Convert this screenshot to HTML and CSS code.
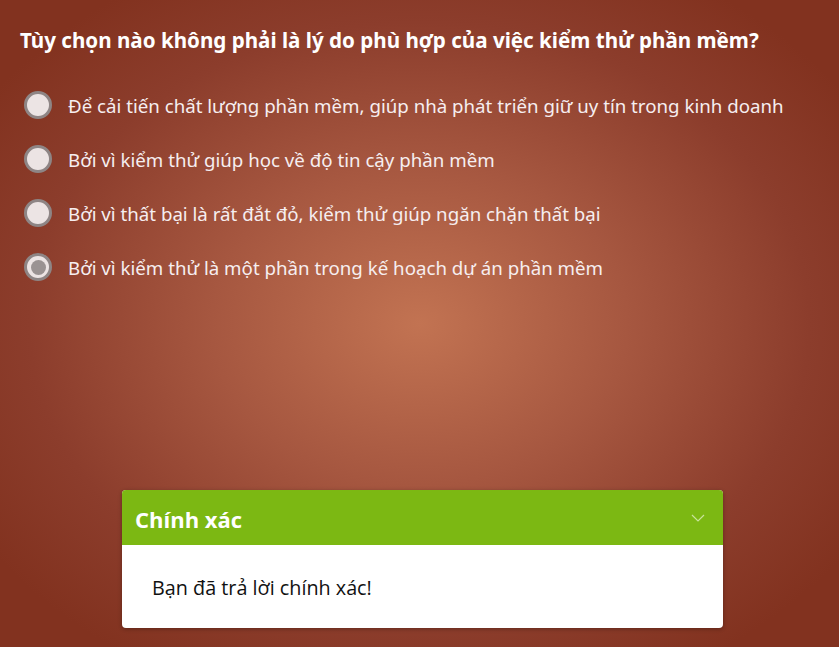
FILE: index.html
```html
<!DOCTYPE html>
<html lang="vi">
<head>
<meta charset="utf-8">
<link rel="stylesheet" href="styles.css">
</head>
<body>
<main class="stage">
  <h1 class="question">Tùy chọn nào không phải là lý do phù hợp của việc kiểm thử phần mềm?</h1>
  <ul class="options">
    <li class="option"><span class="radio"></span><span class="label">Để cải tiến chất lượng phần mềm, giúp nhà phát triển giữ uy tín trong kinh doanh</span></li>
    <li class="option"><span class="radio"></span><span class="label">Bởi vì kiểm thử giúp học về độ tin cậy phần mềm</span></li>
    <li class="option"><span class="radio"></span><span class="label">Bởi vì thất bại là rất đắt đỏ, kiểm thử giúp ngăn chặn thất bại</span></li>
    <li class="option"><span class="radio checked"></span><span class="label">Bởi vì kiểm thử là một phần trong kế hoạch dự án phần mềm</span></li>
  </ul>
  <section class="feedback">
    <header class="fb-head">
      <span class="fb-title">Chính xác</span>
      <svg class="chev" width="14" height="8" viewBox="0 0 14 8"><path d="M1 1 L7 7 L13 1" fill="none" stroke="#c8e29a" stroke-width="1.2"/></svg>
    </header>
    <div class="fb-body">Bạn đã trả lời chính xác!</div>
  </section>
</main>
</body>
</html>
```
FILE: styles.css
```css
html, body {
  margin: 0;
  padding: 0;
  height: 100%;
}
body {
  background: radial-gradient(ellipse 62% 62% at 50% 50%, #c27352 0%, #a65740 40%, #8c3d2c 75%, #82321f 100%);
  font-family: "Noto Sans", "Open Sans", sans-serif;
  color: #fff;
  overflow: hidden;
}
.stage {
  height: 647px;
  display: flex;
  flex-direction: column;
  padding: 0 20px;
  box-sizing: border-box;
}
.question {
  margin: 26px 0 0 0;
  font-size: 20.6px;
  font-weight: 700;
  line-height: 28px;
  white-space: nowrap;
}
.options {
  list-style: none;
  margin: 37px 0 0 0;
  padding: 0;
  display: flex;
  flex-direction: column;
  gap: 26px;
}
.option {
  display: flex;
  align-items: center;
  gap: 16px;
  height: 28px;
  font-size: 18.7px;
  color: #f6eef0;
  white-space: nowrap;
}
.radio {
  width: 22px;
  height: 22px;
  border-radius: 50%;
  border: 3px solid #8e8585;
  background: #ece4e4;
  flex: none;
  margin-left: 4px;
  display: flex;
  align-items: center;
  justify-content: center;
}
.radio.checked::after {
  content: "";
  width: 15px;
  height: 15px;
  border-radius: 50%;
  background: #9a9292;
}
.feedback {
  margin: auto 0 19px 102px;
  width: 601px;
  border-radius: 4px;
  overflow: hidden;
  background: #fff;
  box-shadow: 0 1px 4px rgba(0,0,0,0.3);
  font-family: "Open Sans", "Noto Sans", sans-serif;
}
.fb-head {
  height: 55px;
  background: #7cb813;
  display: flex;
  align-items: center;
  justify-content: space-between;
  padding: 0 18px 0 13px;
}
.fb-title {
  font-size: 22px;
  font-weight: 700;
  color: #fff;
  line-height: 30px;
  padding-top: 3px;
}
.fb-body {
  color: #111;
  font-size: 19.8px;
  padding: 29px 30px 26px 30px;
  line-height: 28px;
}
```
